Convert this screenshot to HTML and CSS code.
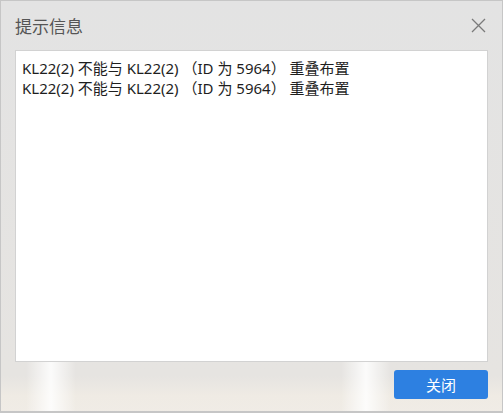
FILE: index.html
```html
<!DOCTYPE html>
<html lang="zh-CN">
<head>
<meta charset="utf-8">
<title>提示信息</title>
<link rel="stylesheet" href="styles.css">
</head>
<body>
<div class="window">
  <div class="titlebar">
    <span class="title">提示信息</span>
    <span class="close" aria-label="关闭">
      <svg width="15" height="15" viewBox="0 0 15 15"><path d="M1 1 L14 14 M14 1 L1 14" stroke="#7a7a7a" stroke-width="1.3" fill="none"/></svg>
    </span>
  </div>
  <div class="content">
    <div class="line">KL22(2) 不能与 KL22(2) （ID 为 5964） 重叠布置</div>
    <div class="line">KL22(2) 不能与 KL22(2) （ID 为 5964） 重叠布置</div>
  </div>
  <div class="footer">
    <button class="btn">关闭</button>
  </div>
</div>
</body>
</html>
```
FILE: styles.css
```css
html, body {
  margin: 0;
  padding: 0;
}
body {
  width: 503px;
  height: 413px;
  overflow: hidden;
  font-family: "Noto Sans", "Noto Sans CJK SC", sans-serif;
}
.window {
  box-sizing: border-box;
  width: 503px;
  height: 413px;
  border: 1px solid #c6c6c6;
  border-bottom-width: 2px;
  padding: 0 14px;
  display: flex;
  flex-direction: column;
  background:
    linear-gradient(to right, rgba(255,255,255,0) 25px, rgba(255,255,255,0.85) 50px, rgba(255,255,255,0) 75px) 0 360px / 100% 52px no-repeat,
    linear-gradient(to right, rgba(255,255,255,0) 340px, rgba(255,255,255,0.85) 365px, rgba(255,255,255,0) 390px) 0 360px / 100% 52px no-repeat,
    linear-gradient(to bottom, #e3e3e3 0, #e6e4e1 375px, #efebe4 395px, #f0ece6 413px);
}
.titlebar {
  height: 49px;
  display: flex;
  align-items: center;
  justify-content: space-between;
}
.title {
  font-family: "Noto Sans CJK SC", sans-serif;
  font-size: 17px;
  color: #555;
}
.close {
  display: flex;
  margin-right: 2px;
  margin-top: -1px;
}
.content {
  height: 312px;
  box-sizing: border-box;
  background: #fff;
  border: 1px solid #d2d2d2;
  padding: 7px 6px;
  font-size: 15px;
  line-height: 20px;
  color: #1e1e1e;
}
.footer {
  display: flex;
  justify-content: flex-end;
  padding-top: 8px;
}
.btn {
  width: 94px;
  height: 29px;
  border: none;
  border-radius: 3px;
  background: #2d80e1;
  color: #fff;
  font-family: "Noto Sans CJK SC", sans-serif;
  font-size: 15px;
  padding: 0;
}
```
